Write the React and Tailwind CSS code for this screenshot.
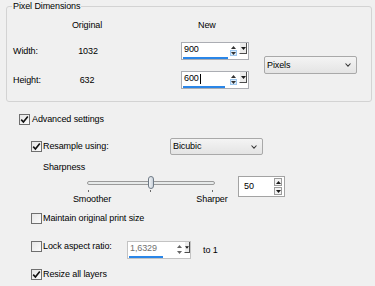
import React from 'react';

// tiny triangle used by the spin / drop buttons
function Tri({ down, color = '#1a1a1a' }) {
  return (
    <svg width="5" height="3" viewBox="0 0 5 3">
      <path d={down ? 'M0 0h5L2.5 3z' : 'M0 3h5L2.5 0z'} fill={color} />
    </svg>
  );
}

function Check({ checked }) {
  return (
    <div className="w-[11px] h-[11px] shrink-0 border border-[#6f6f6f] bg-gradient-to-br from-[#e6e6e6] to-[#fbfbfb] flex items-center justify-center">
      {checked && (
        <svg width="9" height="9" viewBox="0 0 9 9">
          <path d="M1.2 4.6 L3.4 7 L7.8 1.4" fill="none" stroke="#111" strokeWidth="1.6" />
        </svg>
      )}
    </div>
  );
}

function Combo({ label, h }) {
  return (
    <div
      className={`w-[93px] ${h} border border-[#a9a9a9] rounded-[2px] bg-gradient-to-b from-[#f4f4f4] to-[#e4e4e4] flex items-center pl-[2px] pr-[5px]`}
    >
      <span className="flex-1">{label}</span>
      <svg width="6" height="4" viewBox="0 0 6 4">
        <path d="M0.5 0.5 L3 3.2 L5.5 0.5" fill="none" stroke="#3a3a3a" strokeWidth="1.1" />
      </svg>
    </div>
  );
}

// text box with spin arrows, value bar and a little drop button
function SpinInput({ value, bar, caret, disabled, textW, spinW, btnW, outerW }) {
  return (
    <div className={`${outerW} h-[18px] border ${disabled ? 'border-[#c3c3c3]' : 'border-[#abadb3]'} bg-white flex`}>
      <div className={`${textW} flex flex-col pl-[1px] pt-[1px]`}>
        <div className={`h-[11px] flex items-center pl-[1px] ${disabled ? 'text-[#707070]' : ''}`}>
          {value}
          {caret && <span className="w-px h-[10px] bg-black ml-[1px]" />}
        </div>
        <div className={`mt-[2px] h-[2px] bg-[#2a86e8] ${bar}`} />
      </div>
      <div className={`${spinW} flex flex-col items-center pt-[1px]`}>
        <div className="w-[7px] h-[6px] flex items-center justify-center">
          <Tri color={disabled ? '#666' : '#333'} />
        </div>
        <div
          className={`w-[7px] h-[6px] flex items-center justify-center border ${
            disabled ? 'border-transparent' : 'border-[#9cc6ee] bg-[#dcecfa]'
          }`}
        >
          <Tri down color={disabled ? '#666' : '#333'} />
        </div>
      </div>
      <div className={`ml-[1px] ${btnW} h-[11px] border-r border-b border-[#4d4d4d] border-l border-l-white bg-[#ececec] flex items-center justify-center`}>
        <Tri down />
      </div>
    </div>
  );
}

export default function App() {
  return (
    <div className="w-[375px] h-[286px] bg-[#f0f0f0] overflow-hidden text-black text-[9px] tracking-[-0.1px] leading-none font-['Liberation_Sans',Arial,sans-serif]">
      {/* Pixel Dimensions group */}
      <fieldset className="ml-[6px] w-[366px] h-[102px] border border-[#d3d3d3] rounded-[3px]">
        <legend className="ml-[5px] px-[1px] leading-[12px]">Pixel Dimensions</legend>
        <div className="flex pl-[6px] pt-[1px]">
          <div className="w-[47px] flex flex-col">
            <div className="h-[12px] mt-[6px]" />
            <div className="mt-[11px] h-[18px] flex items-center">Width:</div>
            <div className="mt-[11px] h-[18px] flex items-center">Height:</div>
          </div>
          <div className="w-[54px] flex flex-col text-center">
            <div className="h-[12px] mt-[6px] flex items-center justify-center">Original</div>
            <div className="mt-[11px] h-[18px] flex items-center justify-center pl-[2px]">1032</div>
            <div className="mt-[11px] h-[18px] flex items-center justify-center">632</div>
          </div>
          <div className="ml-[67px] w-[68px] flex flex-col">
            <div className="h-[12px] mt-[6px] flex items-center pl-[17px]">New</div>
            <div className="mt-[11px]">
              <SpinInput value="900" bar="w-[45px]" outerW="w-[68px]" textW="w-[47px]" spinW="w-[9px]" btnW="w-[8px]" />
            </div>
            <div className="mt-[11px]">
              <SpinInput value="600" caret bar="w-[42px]" outerW="w-[68px]" textW="w-[47px]" spinW="w-[9px]" btnW="w-[8px]" />
            </div>
          </div>
          <div className="ml-[15px] mt-[43px]">
            <Combo label="Pixels" h="h-[18px]" />
          </div>
        </div>
      </fieldset>

      <div className="flex flex-col">
        {/* Advanced settings */}
        <div className="mt-[12px] h-[11px] flex items-center pl-[19px]">
          <Check checked />
          <span className="ml-[2px]">Advanced settings</span>
        </div>

        {/* Resample */}
        <div className="mt-[13px] h-[17px] flex items-center pl-[31px]">
          <Check checked />
          <span className="ml-[1px] w-[127px]">Resample using:</span>
          <Combo label="Bicubic" h="h-[17px]" />
        </div>

        <div className="mt-[6px] h-[12px] flex items-center pl-[43px]">Sharpness</div>

        {/* Sharpness slider */}
        <div className="mt-[3px] flex">
          <div className="ml-[70px] w-[164px] flex flex-col">
            <div className="relative h-[13px] flex items-center pl-[17px]">
              <div className="w-[128px] h-[4px] rounded-full border border-[#9a9a9a] bg-[#e7eaea]" />
              <div className="absolute left-[78px] top-0 w-[6px] h-[13px] rounded-full border border-[#6e7a86] bg-gradient-to-r from-[#f3f5f7] to-[#c9d1da]" />
            </div>
            <div className="h-[4px] flex pl-[18px] pt-[1px]">
              <div className="w-px h-[2px] bg-[#6a6a6a]" />
              <div className="ml-[61px] w-px h-[2px] bg-[#6a6a6a]" />
              <div className="ml-[61px] w-px h-[2px] bg-[#6a6a6a]" />
            </div>
            <div className="mt-[2px] h-[10px] flex justify-between">
              <span className="w-[44px] text-center">Smoother</span>
              <span className="w-[44px] text-center">Sharper</span>
            </div>
          </div>
          <div className="ml-[4px] w-[47px] h-[21px] border border-[#a3a3a3] bg-white flex items-center">
            <span className="flex-1 pl-[5px]">50</span>
            <div className="flex flex-col gap-[1px] pr-[2px]">
              <div className="w-[8px] h-[8px] border border-[#9c9c9c] bg-[#f3f3f3] flex items-center justify-center">
                <Tri />
              </div>
              <div className="w-[8px] h-[8px] border border-[#9c9c9c] bg-[#f3f3f3] flex items-center justify-center">
                <Tri down />
              </div>
            </div>
          </div>
        </div>

        {/* Maintain original print size */}
        <div className="mt-[8px] h-[11px] flex items-center pl-[31px]">
          <Check />
          <span className="ml-[1px]">Maintain original print size</span>
        </div>

        {/* Lock aspect ratio */}
        <div className="mt-[17px] h-[18px] flex items-start pl-[31px]">
          <Check />
          <span className="ml-[1px] w-[84px] h-[11px] flex items-center">Lock aspect ratio:</span>
          <SpinInput value="1,6329" disabled bar="w-[34px]" outerW="w-[64px]" textW="w-[48px]" spinW="w-[7px]" btnW="w-[6px]" />
          <span className="ml-[12px] h-[18px] flex items-center">to 1</span>
        </div>

        {/* Resize all layers */}
        <div className="mt-[10px] h-[11px] flex items-center pl-[31px]">
          <Check checked />
          <span className="ml-[1px]">Resize all layers</span>
        </div>
      </div>
    </div>
  );
}
